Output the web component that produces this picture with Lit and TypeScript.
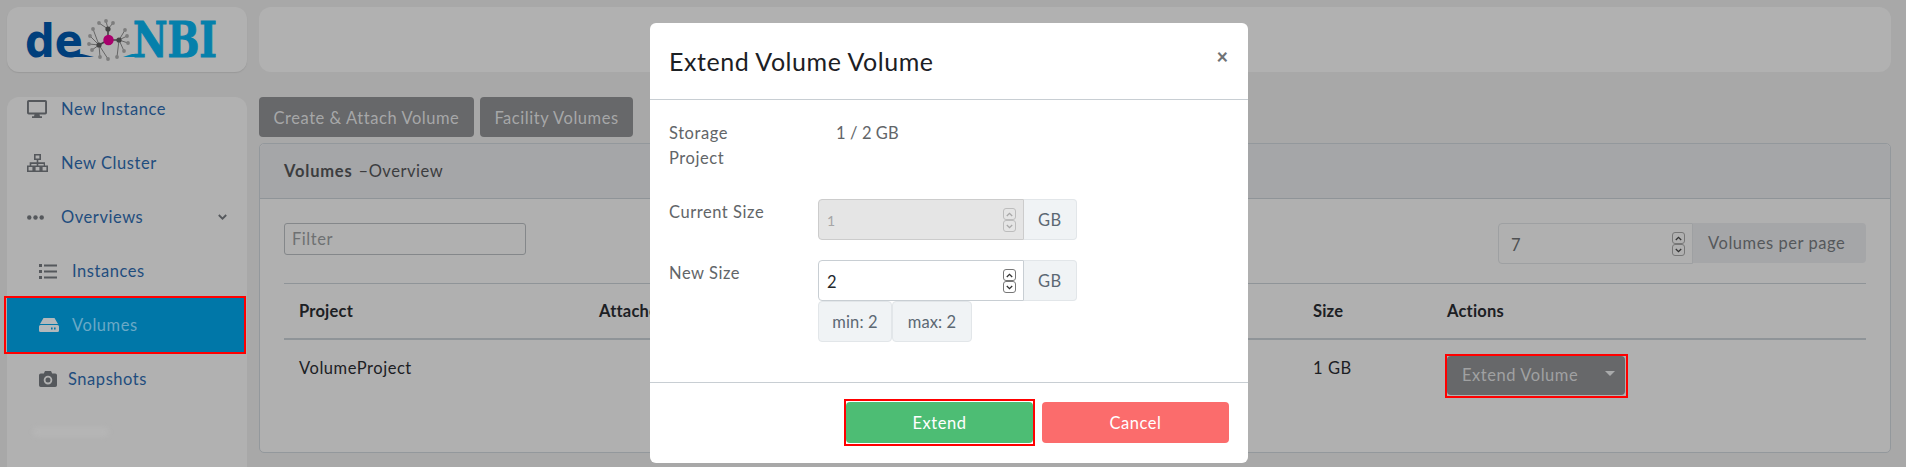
import { LitElement, css, html, svg } from 'lit';
import { customElement } from 'lit/decorators.js';

const tips = [
  [106, 21, 108, 29], [113, 23, 108, 29], [99, 23, 108, 29],
  [93, 29, 99, 45], [90, 36, 99, 45], [89, 44, 99, 45], [92, 50, 99, 45], [100, 57, 99, 45],
  [108, 59, 99, 45], [117, 57, 119, 40], [124, 51, 119, 40], [128, 43, 119, 40],
  [127, 36, 119, 40], [125, 30, 119, 40],
];

const logo = svg`
  <svg class="logo" width="240" height="65" viewBox="7 7 240 65">
    <text x="25" y="57" class="de" textLength="58" lengthAdjust="spacingAndGlyphs">de</text>
    <path d="M66 54h16l12 3H66z" fill="#003f7c" />
    <text x="133" y="57" class="nbi" textLength="84" lengthAdjust="spacingAndGlyphs">NBI</text>
    <path d="M123 57l9-3h8v3z" fill="#0580ab" />
    ${tips.map(([x, y, a, b]) => svg`
      <line x1=${x} y1=${y} x2=${a} y2=${b} stroke="#666" stroke-width="1" />
      <circle cx=${x} cy=${y} r="1.9" fill="#7d7d7d" />`)}
    <path d="M108 29v11M119 40h-11M99 45l9-5" stroke="#444" stroke-width="1.6" />
    <circle cx="108" cy="29" r="2.6" fill="#444" />
    <circle cx="119" cy="40" r="2.6" fill="#444" />
    <circle cx="99" cy="45" r="2.6" fill="#444" />
    <circle cx="108.500" cy="40" r="5.200" fill="#a8006c" />
  </svg>`;

const icons = {
  monitor: svg`<svg width="20" height="18" viewBox="0 0 20 18"><path d="M1.800 0h16.400A1.800 1.800 0 0 1 20 1.800v10.900a1.800 1.800 0 0 1-1.800 1.800h-5.700l.5 1.800h2v1.700H5v-1.700h2l.5-1.800H1.800A1.800 1.800 0 0 1 0 12.700V1.800A1.800 1.800 0 0 1 1.800 0zm.1 1.900v10.700h16.200V1.900z" fill-rule="evenodd"/></svg>`,
  cluster: svg`<svg width="21" height="18" viewBox="0 0 21 18"><path d="M7 0h7v6h-2.700v2.300H18v3.200h3V18h-7v-6.500h2.700V10h-5.400v1.500H14V18H7v-6.500h2.700V10H4.300v1.500H7V18H0v-6.500h2.700V8.300h7V6H7zm1.600 1.500v3h3.800v-3zm-7 11.600v3.300h3.800v-3.300zm7 0v3.300h3.800v-3.300zm7 0v3.300h3.800v-3.300z" fill-rule="evenodd"/></svg>`,
  dots: svg`<svg width="17" height="5" viewBox="0 0 17 5"><circle cx="2.300" cy="2.500" r="2.200"/><circle cx="8.500" cy="2.500" r="2.200"/><circle cx="14.700" cy="2.500" r="2.200"/></svg>`,
  chevron: svg`<svg width="9" height="6" viewBox="0 0 9 6"><path d="M.8 1l3.700 3.700L8.200 1" fill="none" stroke="currentColor" stroke-width="1.800"/></svg>`,
  list: svg`<svg width="18" height="15" viewBox="0 0 18 15"><path d="M0 0h3v3H0zM0 6h3v3H0zM0 12h3v3H0zM5 .5h13v2H5zM5 6.500h13v2H5zM5 12.500h13v2H5z"/></svg>`,
  hdd: svg`<svg width="20" height="14" viewBox="0 0 20 14"><path d="M4.500 0h11L19 6H1zM1.500 7h17A1.500 1.500 0 0 1 20 8.500V12.500A1.500 1.500 0 0 1 18.500 14h-17A1.500 1.500 0 0 1 0 12.500V8.500A1.500 1.500 0 0 1 1.500 7zM12 9.500v2h1.600v-2zm3 0v2h1.600v-2z" fill-rule="evenodd"/></svg>`,
  camera: svg`<svg width="18" height="16" viewBox="0 0 18 16"><path d="M6 0h6l1.200 2.400h3A1.800 1.800 0 0 1 18 4.200v10A1.800 1.800 0 0 1 16.200 16H1.800A1.800 1.800 0 0 1 0 14.200v-10a1.800 1.800 0 0 1 1.800-1.800h3zm3 4.800a4.300 4.300 0 1 0 0 8.600a4.300 4.300 0 0 0 0-8.600zm0 1.800a2.500 2.500 0 1 1 0 5a2.500 2.500 0 0 1 0-5z" fill-rule="evenodd"/></svg>`,
};

// little boxed arrows like the native number stepper in the screenshot
const spin = html`<span class="spin">
  <i><svg width="7" height="5" viewBox="0 0 7 5"><path d="M.8 4l2.700-2.700L6.200 4" fill="none" stroke="currentColor" stroke-width="1.300"/></svg></i>
  <i><svg width="7" height="5" viewBox="0 0 7 5"><path d="M.8 1l2.700 2.700L6.200 1" fill="none" stroke="currentColor" stroke-width="1.300"/></svg></i>
</span>`;

@customElement('app-root')
export class AppRoot extends LitElement {
  static styles = css`
    :host {
      display: block;
      position: relative;
      height: 467px;
      overflow: hidden;
      background: #a8a8a8;
      font-family: Lato, 'Liberation Sans', sans-serif;
      font-size: 16.5px;
      letter-spacing: 0.55px;
      color: #1c2024;
    }
    * {
      box-sizing: border-box;
    }
    .shell {
      display: grid;
      grid-template-columns: 240px 1fr;
      grid-template-rows: 65px 1fr;
      column-gap: 12px;
      row-gap: 25px;
      padding: 7px 15px 0 7px;
      height: 467px;
    }
    .card {
      background: #b1b1b1;
      border-radius: 12px;
    }
    .brand {
      box-shadow: 0 1px 1px #999;
    }
    .logo {
      display: block;
    }
    .logo text {
      font-weight: 700;
      letter-spacing: 0;
    }
    .de {
      font-family: 'DejaVu Sans', sans-serif;
      font-size: 46px;
      fill: #003f7c;
    }
    .nbi {
      font-family: 'DejaVu Serif', serif;
      font-size: 48px;
      fill: #0580ab;
      stroke: #0580ab;
      stroke-width: 1;
    }

    /* sidebar */
    .side {
      display: flex;
      flex-direction: column;
      border-radius: 12px 12px 0 0;
    }
    .item {
      display: flex;
      align-items: center;
      height: 54px;
      padding-left: 20px;
      color: #1f4d7e;
    }
    .item svg {
      fill: #55585c;
    }
    .item .ic {
      width: 34px;
      display: flex;
      flex: none;
    }
    .item.sub {
      padding-left: 32px;
    }
    .item.sub .ic {
      width: 33px;
    }
    .item.snap .ic {
      width: 29px;
    }
    .item.first {
      height: 39px;
      padding-bottom: 15px;
    }
    .item .chev {
      margin: 0 20px 0 auto;
      color: #55585c;
      display: flex;
    }
    .item.active {
      position: relative;
      background: #0077a8;
      color: #6aa9c6;
      margin-right: 3px;
    }
    .item.active svg {
      fill: #b3b8bb;
    }
    .mark::after {
      content: '';
      position: absolute;
      inset: -2px;
      border: 2px solid #f00;
      pointer-events: none;
    }
    .item.mark::after {
      left: -3px;
    }
    .smudge {
      width: 76px;
      height: 10px;
      margin: 21px 0 0 26px;
      background: #bababa;
      opacity: 0.5;
      filter: blur(2px);
      border-radius: 6px;
    }

    /* main */
    .main {
      min-width: 0;
    }
    .btn-row {
      display: flex;
      gap: 6px;
      margin-bottom: 6px;
    }
    .dark-btn {
      background: #67686a;
      color: #a6a7a8;
      border: 0;
      border-radius: 4px;
      height: 40px;
      padding: 2px 14.5px 0;
      font: inherit;
      letter-spacing: inherit;
    }
    .panel {
      background: #b0b0b0;
      border: 1px solid #93989c;
      border-radius: 5px;
      height: 310px;
    }
    .panel-head {
      height: 55px;
      display: flex;
      align-items: center;
      padding: 0 24px;
      background: #a5a6a8;
      border-bottom: 1px solid #8f9498;
      border-radius: 5px 5px 0 0;
      color: #3c3d3f;
    }
    .panel-head b {
      font-weight: 700;
      letter-spacing: 0.8px;
      margin-right: 6px;
    }
    .panel-body {
      padding: 24px 24px 0;
    }
    .tools {
      display: flex;
      justify-content: space-between;
      align-items: flex-start;
      height: 60px;
    }
    .filter {
      width: 242px;
      height: 32px;
      border: 1px solid #84878a;
      border-radius: 3px;
      background: transparent;
      padding: 0 7px;
      font: inherit;
      letter-spacing: inherit;
      outline: none;
    }
    .filter::placeholder {
      color: #6e7072;
      opacity: 1;
    }
    .group {
      display: flex;
    }
    .num {
      position: relative;
      display: flex;
    }
    .group input {
      height: 41px;
      padding: 2px 12px 0;
      font: inherit;
      letter-spacing: inherit;
      outline: none;
      border-radius: 4px 0 0 4px;
      appearance: textfield;
    }
    input::-webkit-inner-spin-button {
      display: none;
    }
    .spin {
      position: absolute;
      right: 8px;
      top: 9px;
      display: flex;
      flex-direction: column;
      color: #333;
    }
    .spin i {
      display: flex;
      align-items: center;
      justify-content: center;
      width: 13px;
      height: 12px;
      border: 1px solid #777;
      border-radius: 3px;
      background: #fff;
    }
    .per .spin i {
      background: transparent;
    }
    .current .spin {
      color: #a8a8a8;
    }
    .current .spin i {
      background: transparent;
      border-color: #bdbdbd;
    }
    .addon {
      display: flex;
      align-items: center;
      height: 40px;
      padding: 0 14px;
      border-radius: 0 4px 4px 0;
    }
    .per input {
      width: 195px;
      color: #4f5052;
      background: #b0b0b0;
      border: 1px solid #9ea0a2;
    }
    .per .addon {
      width: 173px;
      padding-left: 15px;
      background: #a5a6a8;
      color: #55585b;
    }
    table {
      width: 100%;
      border-collapse: collapse;
      table-layout: fixed;
    }
    th {
      height: 55px;
      text-align: left;
      font-weight: 700;
      letter-spacing: 0.2px;
      padding: 0 15px;
      border-top: 1px solid #8f9498;
      border-bottom: 2px solid #8f9498;
    }
    td {
      padding: 17px 15px 15px;
      vertical-align: top;
      line-height: 22px;
    }
    .actions {
      padding-top: 16px;
      padding-left: 15px;
    }
    .dd {
      position: relative;
      display: flex;
      align-items: center;
      justify-content: space-between;
      width: 178px;
      height: 39px;
      padding: 0 10px 0 15px;
      background: #67686a;
      color: #a0a1a2;
      border-radius: 4px;
      border: 0;
      font: inherit;
      letter-spacing: inherit;
    }
    .dd.mark::after {
      inset: -2px -3px -3px -2px;
    }
    .caret {
      border: 5px solid transparent;
      border-top-color: #a9aaab;
      border-bottom: 0;
      margin-top: -4px;
    }

    /* modal */
    .modal {
      position: absolute;
      left: 650px;
      top: 23px;
      width: 598px;
      height: 440px;
      background: #fff;
      border-radius: 6px;
      display: flex;
      flex-direction: column;
      color: #626568;
    }
    .modal-head {
      height: 77px;
      flex: none;
      display: flex;
      justify-content: space-between;
      padding: 0 20px 0 19px;
      border-bottom: 1px solid #c8ced3;
    }
    .modal-head h2 {
      margin: 0;
      font-size: 25px;
      font-weight: 400;
      line-height: 77px;
      color: #1c2024;
    }
    .close {
      font-size: 20px;
      line-height: 66px;
      font-weight: 900;
      letter-spacing: 0;
      color: #707376;
    }
    .modal-body {
      flex: 1;
      padding: 20px 20px 0 19px;
      display: grid;
      grid-template-columns: 149px 1fr;
      grid-template-rows: 79px 61px auto;
      align-content: start;
    }
    .label {
      padding-top: 1px;
      line-height: 25px;
      width: 100px;
    }
    .value {
      padding: 1px 0 0 18px;
      line-height: 25px;
      letter-spacing: 0.1px;
    }
    .size input {
      width: 206px;
      padding-left: 8px;
    }
    .size .addon {
      width: 53px;
      height: 41px;
      background: #f0f3f5;
      border: 1px solid #e2e6e9;
      border-left: 0;
      color: #5c6873;
    }
    .current input {
      background: #e5e5e5;
      border: 1px solid #ccc;
      color: #a6a6a6;
      font-size: 14px;
    }
    .next input {
      background: #fff;
      border: 1px solid #c8ced3;
      color: #23282c;
    }
    .limits {
      display: flex;
    }
    .limit {
      display: flex;
      align-items: center;
      justify-content: center;
      width: 74px;
      height: 41px;
      background: #f0f3f5;
      border: 1px solid #e2e6e9;
      border-radius: 4px;
      color: #5c6873;
      letter-spacing: 0.1px;
    }
    .limit + .limit {
      width: 80px;
    }
    .modal-foot {
      height: 81px;
      flex: none;
      border-top: 1px solid #c8ced3;
      display: flex;
      justify-content: flex-end;
      gap: 9px;
      padding: 19px 19px 0 0;
    }
    .modal-foot button {
      width: 187px;
      height: 41px;
      padding-top: 2px;
      border: 0;
      border-radius: 4px;
      color: #fff;
      font: inherit;
      letter-spacing: inherit;
    }
    .extend {
      position: relative;
      background: #4dbd74;
    }
    .extend.mark::after {
      inset: -3px -2px;
    }
    .cancel {
      background: #fb6c6c;
    }
  `;

  navItem(icon: unknown, label: string, cls = '') {
    return html`<div class="item ${cls}"><span class="ic">${icon}</span>${label}</div>`;
  }

  render() {
    return html`
      <div class="shell">
        <div class="card brand">${logo}</div>
        <div class="card"></div>
        <nav class="card side">
          ${this.navItem(icons.monitor, 'New Instance', 'first')}
          ${this.navItem(icons.cluster, 'New Cluster')}
          <div class="item">
            <span class="ic">${icons.dots}</span>Overviews
            <span class="chev">${icons.chevron}</span>
          </div>
          ${this.navItem(icons.list, 'Instances', 'sub')}
          ${this.navItem(icons.hdd, 'Volumes', 'sub active mark')}
          ${this.navItem(icons.camera, 'Snapshots', 'sub snap')}
          <div class="smudge"></div>
        </nav>
        <main class="main">
          <div class="btn-row">
            <button class="dark-btn">Create &amp; Attach Volume</button>
            <button class="dark-btn">Facility Volumes</button>
          </div>
          <section class="panel">
            <div class="panel-head"><b>Volumes</b> –Overview</div>
            <div class="panel-body">
              <div class="tools">
                <input class="filter" placeholder="Filter" />
                <div class="group per">
                  <span class="num"><input type="number" value="7" />${spin}</span>
                  <span class="addon">Volumes per page</span>
                </div>
              </div>
              <table>
                <colgroup>
                  <col style="width:300px" />
                  <col />
                  <col style="width:134px" />
                  <col style="width:434px" />
                </colgroup>
                <thead>
                  <tr><th>Project</th><th>Attached</th><th>Size</th><th>Actions</th></tr>
                </thead>
                <tbody>
                  <tr>
                    <td>VolumeProject</td>
                    <td></td>
                    <td>1 GB</td>
                    <td class="actions">
                      <button class="dd mark">Extend Volume<span class="caret"></span></button>
                    </td>
                  </tr>
                </tbody>
              </table>
            </div>
          </section>
        </main>
      </div>
      <div class="modal">
        <header class="modal-head">
          <h2>Extend Volume Volume</h2>
          <span class="close">×</span>
        </header>
        <div class="modal-body">
          <div class="label">Storage Project</div>
          <div class="value">1 / 2 GB</div>
          <div class="label">Current Size</div>
          <div class="group size current">
            <span class="num"><input type="number" value="1" disabled />${spin}</span>
            <span class="addon">GB</span>
          </div>
          <div class="label">New Size</div>
          <div>
            <div class="group size next">
              <span class="num"><input type="number" value="2" />${spin}</span>
              <span class="addon">GB</span>
            </div>
            <div class="limits">
              <span class="limit">min: 2</span>
              <span class="limit">max: 2</span>
            </div>
          </div>
        </div>
        <footer class="modal-foot">
          <button class="extend mark">Extend</button>
          <button class="cancel">Cancel</button>
        </footer>
      </div>
    `;
  }
}
